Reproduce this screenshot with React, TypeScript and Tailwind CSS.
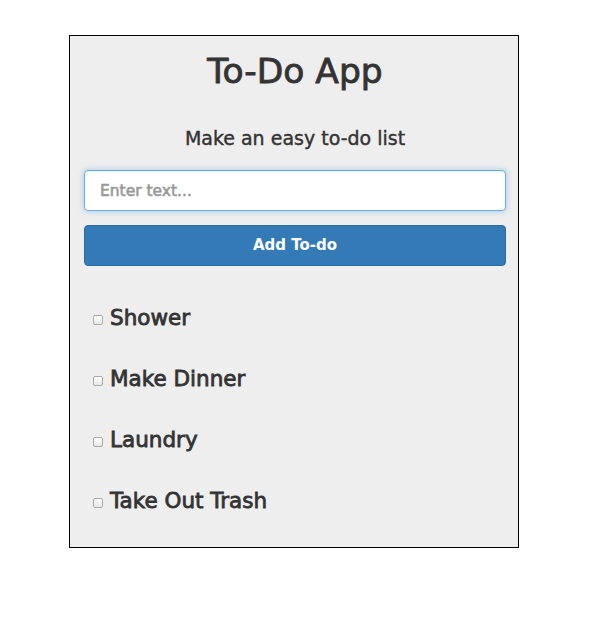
import { useState } from "react";

const initialTodos = ["Shower", "Make Dinner", "Laundry", "Take Out Trash"];

export default function App() {
  const [todos, setTodos] = useState<string[]>(initialTodos);
  const [text, setText] = useState("");

  function addTodo() {
    if (!text.trim()) return;
    setTodos((prev) => [...prev, text.trim()]);
    setText("");
  }

  return (
    <main className="min-h-[622px] bg-white pt-[35px] pl-[69px] font-['DejaVu_Sans',sans-serif] text-[#333]">
      <section className="w-[450px] border border-black bg-[#eee] pt-[15px] pb-[32px] pl-[14px] pr-[12px]">
        <h1 className="text-center text-[34.5px] leading-[40px] font-normal [-webkit-text-stroke:0.8px]">To-Do App</h1>
        <p className="mt-[35px] text-center text-[19px] leading-[24px] [-webkit-text-stroke:0.4px]">
          Make an easy to-do list
        </p>

        <input
          value={text}
          onChange={(event) => setText(event.target.value)}
          placeholder="Enter text..."
          className="mt-[20px] block h-[41px] w-[422px] rounded-[4px] border border-[#66afe9] bg-white px-[15px] text-[15.5px] text-[#555] shadow-[inset_0_1px_1px_rgba(0,0,0,0.075),0_0_6px_rgba(102,175,233,0.6)] outline-none placeholder:text-[#999] [-webkit-text-stroke:0.6px]"
        />
        <button
          type="button"
          onClick={addTodo}
          className="mt-[14px] block h-[41px] w-[422px] rounded-[4px] border border-[#2e6da4] bg-[#337ab7] text-[15px] font-bold text-white"
        >
          Add To-do
        </button>

        <ul className="mt-[38px] flex flex-col gap-[33px] pl-[9px]">
          {todos.map((todo) => (
            <li key={todo} className="flex items-start gap-[7px]">
              <input
                type="checkbox"
                className="mt-[11px] h-[10px] w-[10px] shrink-0 appearance-none rounded-[2px] border border-[#aaa] bg-gradient-to-b from-white to-[#e6e6e6]"
              />
              <span className="text-[21.5px] leading-[28px] [-webkit-text-stroke:0.8px]">{todo}</span>
            </li>
          ))}
        </ul>
      </section>
    </main>
  );
}
